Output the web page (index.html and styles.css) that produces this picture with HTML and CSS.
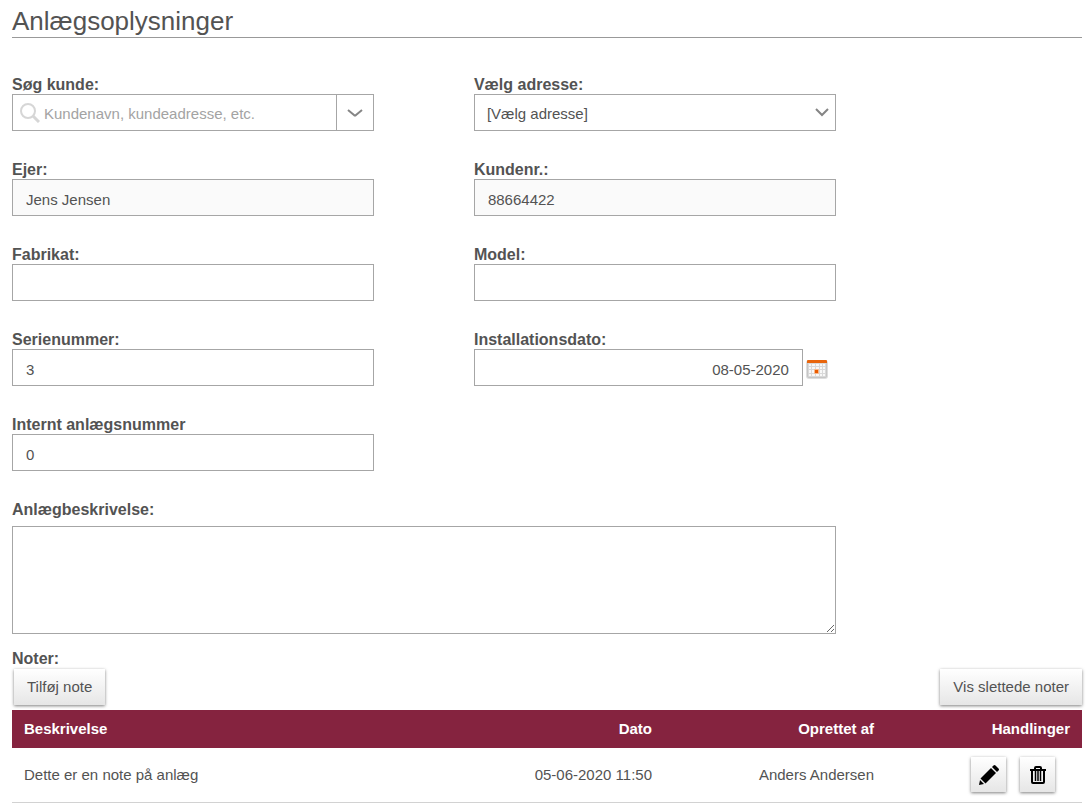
FILE: index.html
```html
<!DOCTYPE html>
<html lang="da">

<head>
	<meta charset="UTF-8">
	<meta name="viewport" content="width=device-width, initial-scale=1.0">
	<title>Anlægsoplysninger</title>
	<link rel="stylesheet" href="styles.css">
</head>

<body>
	<h1>Anlægsoplysninger</h1>
	<form class="form">
		<div class="field">
			<label for="search">Søg kunde:</label>
			<div class="box combo">
				<svg class="search-icon" width="20" height="20" viewBox="0 0 20 20" fill="none" stroke="#d6d6d6">
					<circle cx="8" cy="8" r="7" stroke-width="2" />
					<path d="M13 13l6 6" stroke-width="3" />
				</svg>
				<input type="text" id="search" placeholder="Kundenavn, kundeadresse, etc.">
				<button type="button" class="combo-button" aria-label="Vis kunder">
					<svg width="16" height="10" viewBox="0 0 16 10" fill="none" stroke="#858585" stroke-width="2">
						<path d="M1 2l6 5q1 1 2 0l6-5" />
					</svg>
				</button>
			</div>
		</div>
		<div class="field">
			<label for="address">Vælg adresse:</label>
			<div class="box select-box">
				<select id="address">
					<option>[Vælg adresse]</option>
				</select>
				<svg class="select-arrow" width="14" height="10" viewBox="0 0 14 10" fill="none" stroke="#858585" stroke-width="2">
					<path d="M1 1l6 6 6-6" />
				</svg>
			</div>
		</div>
		<div class="field">
			<label for="owner">Ejer:</label>
			<input class="box" type="text" id="owner" value="Jens Jensen" readonly>
		</div>
		<div class="field">
			<label for="customer">Kundenr.:</label>
			<input class="box" type="text" id="customer" value="88664422" readonly>
		</div>
		<div class="field">
			<label for="make">Fabrikat:</label>
			<input class="box" type="text" id="make">
		</div>
		<div class="field">
			<label for="model">Model:</label>
			<input class="box" type="text" id="model">
		</div>
		<div class="field">
			<label for="serial">Serienummer:</label>
			<input class="box" type="text" id="serial" value="3">
		</div>
		<div class="field">
			<label for="installed">Installationsdato:</label>
			<div class="date-row">
				<input class="box date" type="text" id="installed" value="08-05-2020">
				<button type="button" class="calendar" aria-label="Vælg dato">
					<svg width="22" height="22" viewBox="0 0 22 22">
						<rect x="0" y="2" width="22" height="19" rx="3" fill="#dedede" />
						<rect x="1" y="3" width="20" height="17" rx="2" fill="#c6c6c6" />
						<path d="M2 5h18v13q0 1-1 1H3q-1 0-1-1z" fill="#d9d9d9" />
						<path d="M1 3q0-1 1-1h18q1 0 1 1v2H1z" fill="#e8650c" />
						<g fill="#f8f8f8">
							<path d="M3 6h2v2H3zM6 6h3v2H6zM10 6h3v2h-3zM14 6h2v2h-2zM17 6h2v2h-2z" />
							<path d="M3 9h2v2H3zM6 9h3v2H6zM10 9h3v2h-3zM14 9h2v2h-2zM17 9h2v2h-2z" />
							<path d="M3 12h2v3H3zM6 12h2v3H6zM14 12h2v3h-2zM17 12h2v3h-2z" />
							<path d="M3 16h2v2H3zM6 16h3v2H6zM10 16h3v2h-3zM14 16h2v2h-2zM17 16h2v2h-2z" />
						</g>
						<rect x="8" y="11" width="5" height="5" rx="1" fill="#f7b98d" />
						<rect x="9" y="12" width="3" height="3" fill="#ea5b00" />
					</svg>
				</button>
			</div>
		</div>
		<div class="field">
			<label for="internal">Internt anlægsnummer</label>
			<input class="box" type="text" id="internal" value="0">
		</div>
		<div class="field wide">
			<label for="description">Anlægbeskrivelse:</label>
			<textarea id="description"></textarea>
		</div>
	</form>
	<section class="notes">
		<h2>Noter:</h2>
		<div class="toolbar">
			<button type="button" class="btn">Tilføj note</button>
			<button type="button" class="btn">Vis slettede noter</button>
		</div>
		<table>
			<thead>
				<tr>
					<th class="text">Beskrivelse</th>
					<th class="col">Dato</th>
					<th class="col">Oprettet af</th>
					<th class="col-actions">Handlinger</th>
				</tr>
			</thead>
			<tbody>
				<tr>
					<td class="text">Dette er en note på anlæg</td>
					<td>05-06-2020 11:50</td>
					<td>Anders Andersen</td>
					<td class="actions-cell">
						<div class="actions">
							<button type="button" class="btn icon" aria-label="Rediger">
								<svg width="20" height="20" viewBox="0 0 20 20">
									<path d="M0 20l1-5 4 4z" />
									<path d="M1.500 13.500L12 3l5 5L6.500 18.500z" />
									<path d="M13 2l1.500-1.500q1-1 2 0l3 3q1 1 0 2L18 7z" />
								</svg>
							</button>
							<button type="button" class="btn icon" aria-label="Slet">
								<svg width="16" height="20" viewBox="0 0 16 20" fill="none" stroke="#000">
									<path d="M0 5h16M5 5V3q0-1 1-1h4q1 0 1 1v2" stroke-width="2" />
									<path d="M2 5v12q0 1 1 1h10q1 0 1-1V5" stroke-width="2" />
									<path d="M5.500 6v10M8 6v10M10.500 6v10" stroke-width="1.500" />
								</svg>
							</button>
						</div>
					</td>
				</tr>
			</tbody>
		</table>
	</section>
</body>

</html>
```
FILE: styles.css
```css
* {
	box-sizing: border-box;
}

body {
	margin: 0;
	padding: 6px 7px 0 12px;
	background: #fff;
	color: #535353;
	font: 15px/18px "Liberation Sans", Arial, sans-serif;
}

h1 {
	margin: 0 0 38px;
	border-bottom: 1px solid #999;
	font-size: 26px;
	font-weight: normal;
	line-height: 31px;
}

input,
select,
textarea,
button {
	margin: 0;
	font: inherit;
	color: inherit;
}

button {
	cursor: pointer;
}

svg {
	display: block;
}

.form {
	display: grid;
	grid-template-columns: 1fr 1fr;
	gap: 30px 100px;
	width: 77%;
}

.field {
	display: flex;
	flex-direction: column;
	min-width: 0;
}

.field label,
h2 {
	margin: 0;
	font-size: 16px;
	font-weight: bold;
	line-height: 18px;
}

.box {
	width: 100%;
	height: 37px;
	padding: 3px 13px 0;
	border: 1px solid #a6a6a6;
	border-radius: 0;
	background: #fff;
	outline: none;
}

.box[readonly] {
	background: #fafafa;
}

.combo {
	display: flex;
	align-items: center;
	padding: 0;
}

.search-icon {
	margin-left: 7px;
}

.combo input {
	flex: 1;
	min-width: 0;
	height: 100%;
	padding: 2px 4px 0;
	border: 0;
	background: none;
	outline: none;
}

.combo input::placeholder {
	color: #a3a3a3;
	opacity: 1;
}

.combo-button {
	display: flex;
	align-items: center;
	justify-content: center;
	width: 37px;
	height: 100%;
	padding: 0;
	border: 0;
	border-left: 1px solid #a6a6a6;
	background: none;
}

.select-box {
	position: relative;
	padding: 0;
}

.select-box select {
	width: 100%;
	height: 100%;
	padding: 3px 32px 0 12px;
	border: 0;
	background: none;
	appearance: none;
	outline: none;
}

.select-arrow {
	position: absolute;
	top: 13px;
	right: 6px;
	pointer-events: none;
}

.date-row {
	display: flex;
	align-items: center;
	gap: 3px;
	padding-right: 8px;
}

.date {
	flex: 1;
	min-width: 0;
	text-align: right;
}

.calendar {
	padding: 2px 0 0;
	border: 0;
	background: none;
}

.wide {
	grid-column: 1 / -1;
	gap: 7px;
}

textarea {
	width: 100%;
	height: 108px;
	padding: 8px 13px;
	border: 1px solid #a6a6a6;
	background: #fff;
	outline: none;
}

.notes {
	margin-top: 16px;
}

.toolbar {
	display: flex;
	justify-content: space-between;
	padding: 1px 0 5px 2px;
}

.btn {
	height: 36px;
	padding: 0 13px;
	border: 0;
	background: linear-gradient(#fff, #e6e6e6);
	box-shadow: 0 1px 3px rgba(0, 0, 0, 0.5);
}

.icon {
	display: flex;
	align-items: center;
	justify-content: center;
	width: 35px;
	height: 35px;
	padding: 0;
}

table {
	width: 100%;
	border-collapse: collapse;
	table-layout: fixed;
}

th,
td {
	padding: 10px 12px;
	text-align: right;
}

th {
	background: #85233f;
	color: #fff;
}

td {
	border-bottom: 1px solid #d2d2d2;
}

.text {
	text-align: left;
}

.col {
	width: 222px;
}

.col-actions {
	width: 196px;
}

.actions-cell {
	padding: 9px 27px 10px 0;
}

.actions {
	display: flex;
	justify-content: flex-end;
	gap: 14px;
}
```
